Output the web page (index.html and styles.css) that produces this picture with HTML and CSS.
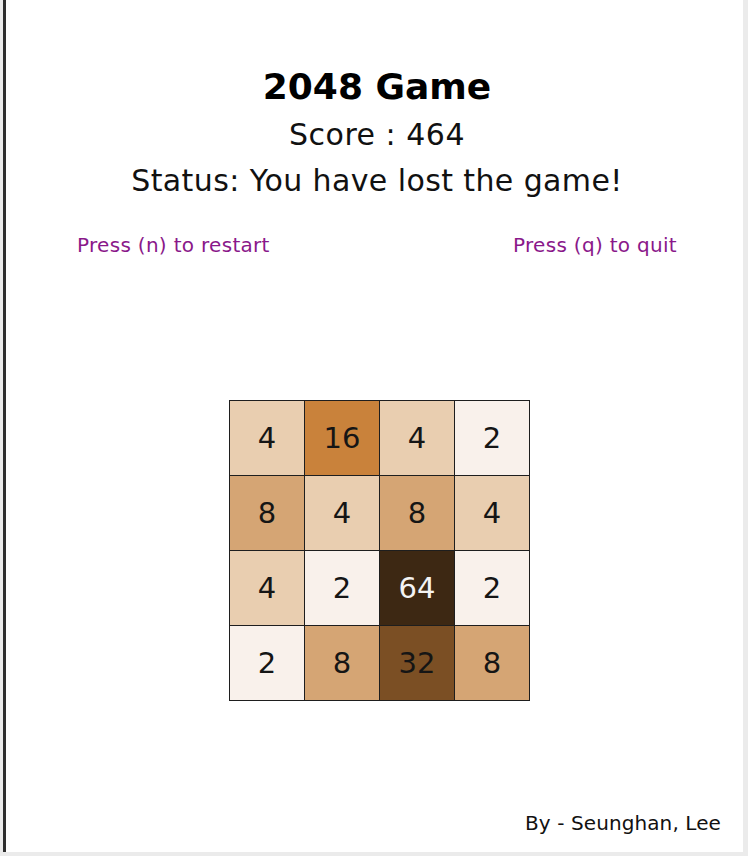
FILE: index.html
```html
<!DOCTYPE html>
<html lang="en">
<head>
<meta charset="utf-8">
<title>2048 Game</title>
<link rel="stylesheet" href="styles.css">
</head>
<body>
<div class="frame">
  <header class="head">
    <h1 class="title">2048 Game</h1>
    <p class="score">Score : 464</p>
    <p class="status">Status: You have lost the game!</p>
  </header>
  <div class="controls">
    <span class="hint">Press (n) to restart</span>
    <span class="hint">Press (q) to quit</span>
  </div>
  <div class="board">
    <div class="tile t4">4</div>
    <div class="tile t16">16</div>
    <div class="tile t4">4</div>
    <div class="tile t2">2</div>
    <div class="tile t8">8</div>
    <div class="tile t4">4</div>
    <div class="tile t8">8</div>
    <div class="tile t4">4</div>
    <div class="tile t4">4</div>
    <div class="tile t2">2</div>
    <div class="tile t64">64</div>
    <div class="tile t2">2</div>
    <div class="tile t2">2</div>
    <div class="tile t8">8</div>
    <div class="tile t32">32</div>
    <div class="tile t8">8</div>
  </div>
  <footer class="credit">By - Seunghan, Lee</footer>
</div>
</body>
</html>
```
FILE: styles.css
```css
* { box-sizing: border-box; }
html, body { margin: 0; padding: 0; }
body {
  background: #ebebeb;
  font-family: "DejaVu Sans", Verdana, sans-serif;
  color: #111;
  width: 748px;
  height: 856px;
  overflow: hidden;
}
.frame {
  margin-left: 3px;
  width: 740px;
  height: 852px;
  border-left: 3px solid #2e2e2e;
  background: #fff;
  display: flex;
  flex-direction: column;
  padding: 65px 0 0 5px;
}
.head { text-align: center; }
.title {
  margin: 0;
  font-size: 36px;
  line-height: 43px;
  font-weight: bold;
  color: #000;
}
.score {
  margin: 9px 0 0;
  font-size: 30px;
  line-height: 36px;
  letter-spacing: 0.5px;
}
.status {
  margin: 10px 0 0;
  font-size: 30px;
  line-height: 36px;
  letter-spacing: 0.4px;
}
.controls {
  margin-top: 34px;
  display: flex;
  justify-content: space-between;
  padding: 0 66px;
}
.hint {
  color: #8a188a;
  font-size: 20px;
  line-height: 24px;
  letter-spacing: 0.3px;
}
.board {
  margin: 143px 0 0 218px;
  width: 301px;
  height: 301px;
  display: grid;
  grid-template-columns: repeat(4, 74px);
  grid-template-rows: repeat(4, 74px);
  gap: 1px;
  padding: 1px;
  background: #1e1e1e;
}
.tile {
  display: flex;
  align-items: center;
  justify-content: center;
  font-size: 29px;
  color: #151515;
}
.t2 { background: #f9f1eb; }
.t4 { background: #e9ceb0; }
.t8 { background: #d5a574; }
.t16 { background: #c9823b; }
.t32 { background: #7b4f24; }
.t64 { background: #3d2813; color: #f4f4f4; }
.credit {
  margin-top: auto;
  margin-bottom: 17px;
  text-align: right;
  padding-right: 22px;
  font-size: 20px;
  line-height: 24px;
  letter-spacing: 0.1px;
  color: #111;
}
```
